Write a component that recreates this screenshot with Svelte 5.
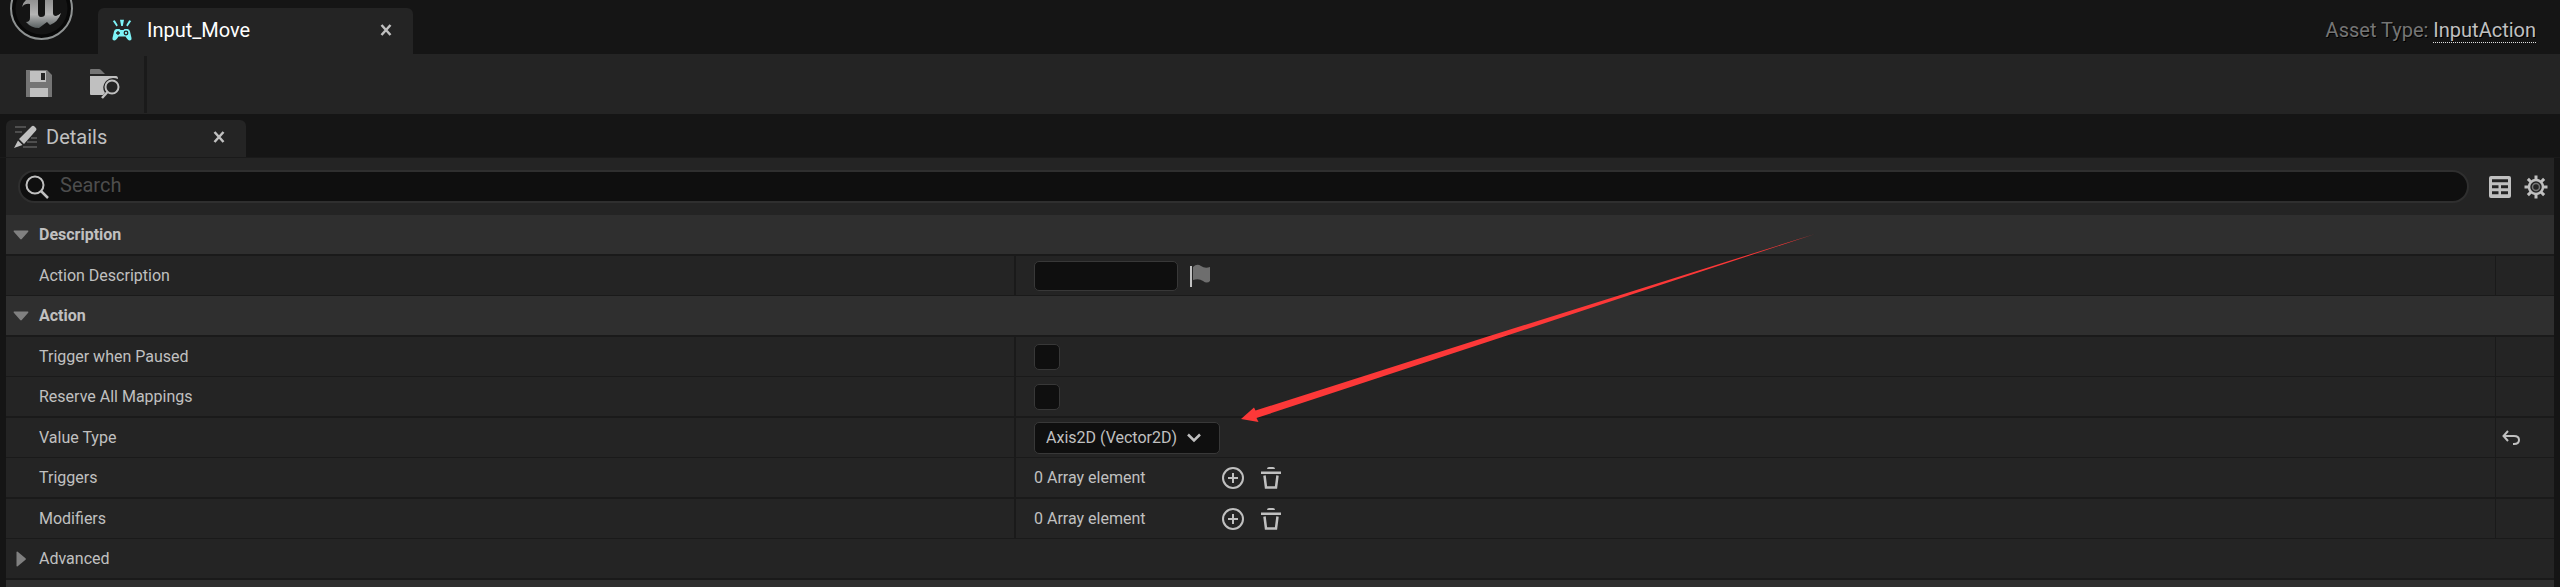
<script>
  let open = $state({ Description: true, Action: true });
  let valueType = $state('Axis2D (Vector2D)');
  let query = $state('');
  const arrays = ['Triggers', 'Modifiers'];
</script>

{#snippet header(name)}
  <h2 class="section">
    <button class="toggle" aria-expanded={open[name]} onclick={() => (open[name] = !open[name])}>
      <svg class="caret" width="16" height="16" viewBox="0 0 16 16" aria-hidden="true"><path d="M1 3.5h14q.8.3.2 1.2L8.800 12q-.8.9-1.600 0L.8 4.700q-.6-.9.2-1.200z" fill="#808080" /></svg>
      {name}
    </button>
  </h2>
{/snippet}

<div class="window">
  <header class="titlebar">
    <div class="logo">
      <svg width="66" height="42" viewBox="0 0 66 42" aria-hidden="true">
        <defs>
          <linearGradient id="metal" x1="0" y1="0" x2="0" y2="1"><stop offset="0" stop-color="#8c8c8c" /><stop offset=".55" stop-color="#b4b4b4" /><stop offset="1" stop-color="#596061" /></linearGradient>
        </defs>
        <circle cx="32.500" cy="8.500" r="30.500" fill="#080808" stroke="#8e9292" stroke-width="2" />
        <circle cx="32.500" cy="8.500" r="26" fill="#141414" />
        <path d="M13 7Q14 1 20-2H29V13Q29 17 32 17 36 17 36 14V-2H44V13Q44 16 47 16 50 15 52 13 49 22 41 25L38 22 30 28Q22 28 17 22 21 22 21 18V4Q16 3 13 7z" fill="url(#metal)" />
      </svg>
    </div>
    <div class="doc-tab">
      <svg width="20" height="22" viewBox="0 0 20 22" aria-hidden="true" fill="#7df4f7">
        <path d="M.8 2l2-.8L5.800 6.200 4.500 7.500zM8 .8h4L10.800 7H9.200zM19.200 2l-2-.8L14.200 6.200l1.300 1.300z" />
        <path d="M4.500 10h3l1 1h3l1-1h3q2 0 2.500 2.500L19.500 19q.3 2.500-2 2.500-1.500 0-4-4h-7q-2.500 4-4 4-2.300 0-2-2.500L2 12.500Q2.500 10 4.500 10z" />
        <path d="M6 12v4M4 14h4" stroke="#242424" stroke-width="1.300" /><circle cx="14" cy="14" r="1.800" fill="none" stroke="#242424" stroke-width="1.300" />
      </svg>
      <span>Input_Move</span>
      <button class="close" aria-label="Close Input_Move"><svg width="12" height="12" viewBox="0 0 12 12"><path d="M1.500 1l9 10M10.500 1l-9 10" stroke="#c0c0c0" stroke-width="2.500" /></svg></button>
    </div>
    <p class="asset">Asset Type: <a href="#asset">InputAction</a></p>
  </header>

  <div class="toolbar">
    <button aria-label="Save">
      <svg width="28" height="28" viewBox="0 0 28 28"><path d="M1 0h21l5 5v22H1z" fill="#757575" /><path d="M5 1h16v11H5zM5 18h18v9H5z" fill="#c0c0c0" /><path d="M16 3h4v7h-4z" fill="#242424" /></svg>
    </button>
    <button aria-label="Browse to asset">
      <svg width="31" height="30" viewBox="0 0 31 30"><path d="M1 5V1q0-1 1-1h8q1 0 2 1l4 4z" fill="#757575" /><path d="M1 7h26q2 0 2 3-7-3-12 2-5 6-1 12l-2 2H2q-1 0-1-1z" fill="#c0c0c0" /><circle cx="23" cy="18" r="6.500" fill="none" stroke="#c0c0c0" stroke-width="2" /><path d="M18.500 23L13 29" stroke="#c0c0c0" stroke-width="2.500" /></svg>
    </button>
  </div>

  <div class="panel-tabs">
    <div class="panel-tab">
      <svg width="24" height="24" viewBox="0 0 24 24" aria-hidden="true"><path d="M1 2h11M1 7h7M17 13h6M13 17h10M9 22h14" stroke="#5c5c5c" stroke-width="1.500" /><path d="M17.500 1.500q1.500-1.500 3 0l1.500 1.500q1 1 0 2.500L10 19l-5-5zM4 15.500l4.500 4.500L0 23z" fill="#c0c0c0" /></svg>
      <span>Details</span>
      <button class="close" aria-label="Close Details"><svg width="12" height="12" viewBox="0 0 12 12"><path d="M1.500 1l9 10M10.500 1l-9 10" stroke="#c0c0c0" stroke-width="2.500" /></svg></button>
    </div>
  </div>

  <main class="panel">
    <div class="search-row">
      <label class="search">
        <svg width="24" height="24" viewBox="0 0 24 24" aria-hidden="true"><circle cx="10" cy="10" r="8.500" fill="none" stroke="#c0c0c0" stroke-width="2" /><path d="M16 16l7 7" stroke="#c0c0c0" stroke-width="2.500" /></svg>
        <input type="text" placeholder="Search" aria-label="Search" bind:value={query} />
      </label>
      <button aria-label="Open in property matrix">
        <svg width="22" height="22" viewBox="0 0 22 22"><path fill-rule="evenodd" d="M2 0h18q2 0 2 2v18q0 2-2 2H2q-2 0-2-2V2q0-2 2-2zM3 3.300v3h16v-3zM3 9.300v3h6.500v-3zM12 9.300v3h7v-3zM3 15.300v3h6.500v-3zM12 15.300v3h7v-3z" fill="#c0c0c0" /></svg>
      </button>
      <button aria-label="View options">
        <svg width="24" height="24" viewBox="-12 -12 24 24" fill="none" stroke="#c0c0c0"><circle r="7" stroke-width="2.500" /><circle r="3.500" stroke="#757575" stroke-width="1.500" />
          {#each [0, 45, 90, 135, 180, 225, 270, 315] as a}<path d="M0-7v-4.500" stroke-width="3" transform="rotate({a})" />{/each}
        </svg>
      </button>
    </div>

    {@render header('Description')}
    {#if open.Description}
      <div class="row">
        <label class="name" for="description">Action Description</label>
        <div class="value">
          <input id="description" class="text" type="text" />
          <button class="flag" aria-label="Localization settings"><svg width="22" height="24" viewBox="0 0 22 24"><path d="M1 2v21" stroke="#c0c0c0" stroke-width="2" /><path d="M3 3q4-4 8-1t9 1v14q-3 3-7 0t-10-1z" fill="#6e6e6e" /></svg></button>
        </div>
        <div class="reset"></div>
      </div>
    {/if}

    {@render header('Action')}
    {#if open.Action}
      <div class="row">
        <label class="name" for="paused">Trigger when Paused</label>
        <div class="value"><input id="paused" type="checkbox" /></div>
        <div class="reset"></div>
      </div>
      <div class="row thick">
        <label class="name" for="reserve">Reserve All Mappings</label>
        <div class="value"><input id="reserve" type="checkbox" /></div>
        <div class="reset"></div>
      </div>
      <div class="row">
        <label class="name" for="value-type">Value Type</label>
        <div class="value">
          <div class="select">
            <select id="value-type" bind:value={valueType}>
              <option>Digital (bool)</option>
              <option>Axis1D (float)</option>
              <option>Axis2D (Vector2D)</option>
              <option>Axis3D (Vector)</option>
            </select>
            <svg class="chevron" width="16" height="10" viewBox="0 0 16 10" aria-hidden="true"><path d="M2 1.500l6 6 6-6" fill="none" stroke="#c0c0c0" stroke-width="2.500" /></svg>
          </div>
          <svg class="pointer" width="576" height="186" viewBox="0 0 576 186" aria-hidden="true"><path d="M0 183L13 171.500L14.500 174.500L250 99.500L574-2L260 101.500L15.500 182L17.500 186z" fill="#fc3838" /></svg>
        </div>
        <div class="reset">
          <button aria-label="Reset to default"><svg width="18" height="16" viewBox="0 0 18 16"><path d="M6 1L1.500 6 6 11M2 6h10q5 0 5 4t-5 4h-1" fill="none" stroke="#c0c0c0" stroke-width="2" /></svg></button>
        </div>
      </div>
      {#each arrays as name, i}
        <div class="row" class:thick={i === 0}>
          <div class="name">{name}</div>
          <div class="value">
            <span class="count">0 Array element</span>
            <button class="icon" aria-label="Add element to {name}"><svg width="24" height="24" viewBox="0 0 24 24" fill="none" stroke="#c0c0c0"><circle cx="12" cy="12" r="10" stroke-width="2" /><path d="M12 7v10M7 12h10" stroke-width="2" /></svg></button>
            <button class="icon" aria-label="Remove all from {name}"><svg width="22" height="24" viewBox="0 0 22 24"><path d="M7 3q0-2 2-2h4q2 0 2 2zM1 5.500h20v2.500H1z" fill="#c0c0c0" /><path d="M4.500 9.500l1.500 12h10l1.500-12" fill="none" stroke="#c0c0c0" stroke-width="2.500" /></svg></button>
          </div>
          <div class="reset"></div>
        </div>
      {/each}
      <div class="row thick">
        <button class="toggle" aria-expanded="false">
          <svg class="caret" width="16" height="16" viewBox="0 0 16 16" aria-hidden="true"><path d="M3.500 1q.3-.8 1.200-.2L12.500 7.200q.9.800 0 1.600L4.700 15.200q-.9.600-1.200-.2z" fill="#808080" /></svg>
          Advanced
        </button>
      </div>
    {/if}
    <div class="next-section"></div>
  </main>
</div>

<style>
  :global(body) { background: #151515; }
  :global(#app) { height: 100vh; overflow: hidden; }
  .window {
    height: 100%;
    display: flex;
    flex-direction: column;
    overflow: hidden;
    background: #151515;
    color: #c0c0c0;
    font: 16px/20px Roboto, sans-serif;
  }
  button { margin: 0; padding: 0; border: 0; background: none; color: inherit; font: inherit; display: flex; align-items: center; cursor: pointer; }
  input, select { box-sizing: border-box; margin: 0; font: inherit; color: inherit; }
  svg { display: block; flex: none; }

  .titlebar { flex: none; height: 54px; display: flex; align-items: flex-end; }
  .logo { width: 98px; align-self: flex-start; padding-left: 9px; box-sizing: border-box; }
  .doc-tab {
    box-sizing: border-box;
    width: 315px;
    height: 46px;
    padding: 0 21px 2px 14px;
    display: flex;
    align-items: center;
    gap: 15px;
    border-radius: 6px 6px 0 0;
    background: #242424;
    color: #fff;
    font-size: 20px;
  }
  .close { margin-left: auto; }
  .asset { margin: 0 24px 12px auto; font-size: 20px; line-height: 24px; color: #757575; text-shadow: 1px 1px #000; }
  .asset a { color: #c0c0c0; text-decoration: none; border-bottom: 1px dotted #e0e0e0; }

  .toolbar { flex: none; box-sizing: border-box; height: 60px; padding: 0 0 0 25px; display: flex; align-items: center; gap: 36px; background: #242424; }
  .toolbar::after { content: ''; width: 3px; height: 57px; margin-left: -12px; background: #1a1a1a; }

  .panel-tabs { flex: none; height: 43px; padding: 0 6px; display: flex; align-items: flex-end; border-bottom: 1px solid #1a1a1a; }
  .panel-tab {
    box-sizing: border-box;
    width: 240px;
    height: 37px;
    padding: 0 21px 4px 8px;
    display: flex;
    align-items: center;
    gap: 8px;
    border-radius: 6px 6px 0 0;
    background: #242424;
    font-size: 20px;
  }

  .panel { margin: 0 6px; background: #242424; }
  .search-row { height: 57px; padding: 0 6px 0 12px; display: flex; align-items: center; gap: 13px; }
  .search {
    flex: 1;
    box-sizing: border-box;
    height: 33px;
    margin-right: 7px;
    padding-left: 5px;
    display: flex;
    align-items: center;
    gap: 11px;
    border: 2px solid #2f2f2f;
    border-radius: 17px;
    background: #0f0f0f;
  }
  .search input { flex: 1; height: 28px; padding: 0 0 4px; border: 0; outline: 0; background: none; font-size: 20px; }
  .search input::placeholder { color: #4d4d4d; opacity: 1; }

  .section { margin: 0; height: 39px; border-bottom: 2px solid #1a1a1a; background: #2f2f2f; font: inherit; font-weight: 700; }
  .toggle { width: 100%; height: 100%; padding-left: 7px; gap: 10px; }
  .row { height: 39px; display: flex; border-bottom: 1px solid #1a1a1a; }
  .row.thick { border-bottom-width: 2px; }
  .name { width: 39.64%; box-sizing: border-box; padding-left: 33px; display: flex; align-items: center; border-right: 2px solid #1a1a1a; }
  .value { position: relative; flex: 1; padding-left: 18px; display: flex; align-items: center; }
  .reset { width: 52px; padding-left: 6px; display: flex; align-items: center; border-left: 1px solid #1a1a1a; }

  .text, .value input[type='checkbox'], .select select { appearance: none; border: 1px solid #383838; border-radius: 5px; background: #0f0f0f; }
  .text { width: 144px; height: 30px; padding: 0 8px; }
  .value input[type='checkbox'] { width: 26px; height: 26px; }
  .flag { margin-left: 12px; }
  .select { position: relative; }
  .select select { width: 186px; height: 32px; padding: 0 40px 0 11px; }
  .chevron { position: absolute; right: 18px; top: 11px; pointer-events: none; }
  .count { width: 187px; }
  .icon { margin-right: 15px; }
  .pointer { position: absolute; left: 225px; top: -182px; z-index: 1; overflow: visible; pointer-events: none; }
  .next-section { height: 40px; background: #2f2f2f; }
</style>
